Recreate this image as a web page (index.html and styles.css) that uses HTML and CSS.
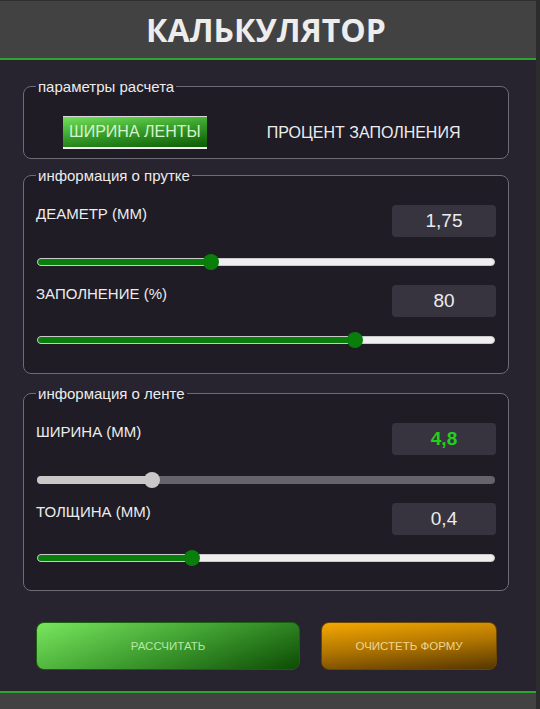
FILE: index.html
```html
<!DOCTYPE html>
<html lang="ru">
<head>
<meta charset="utf-8">
<title>Калькулятор</title>
<link rel="stylesheet" href="styles.css">
</head>
<body>
<div class="app">
  <header class="header"><h1 class="title">КАЛЬКУЛЯТОР</h1></header>
  <main class="main">
    <fieldset class="box box-params">
      <legend class="legend">параметры расчета</legend>
      <div class="toggle">
        <button class="tab tab-active">ШИРИНА ЛЕНТЫ</button>
        <button class="tab">ПРОЦЕНТ ЗАПОЛНЕНИЯ</button>
      </div>
    </fieldset>

    <fieldset class="box box-info">
      <legend class="legend">информация о прутке</legend>
      <div class="row">
        <span class="label">ДЕАМЕТР (ММ)</span>
        <span class="value">1,75</span>
      </div>
      <div class="slider"><div class="track"><div class="fill" style="width:38%"></div></div><span class="thumb" style="left:38%"></span></div>
      <div class="row">
        <span class="label">ЗАПОЛНЕНИЕ (%)</span>
        <span class="value">80</span>
      </div>
      <div class="slider slider-last"><div class="track"><div class="fill" style="width:69.4%"></div></div><span class="thumb" style="left:69.4%"></span></div>
    </fieldset>

    <fieldset class="box box-info box-tape">
      <legend class="legend">информация о ленте</legend>
      <div class="row">
        <span class="label">ШИРИНА (ММ)</span>
        <span class="value value-result">4,8</span>
      </div>
      <div class="slider slider-off"><div class="track"><div class="fill" style="width:25.1%"></div></div><span class="thumb" style="left:25.1%"></span></div>
      <div class="row">
        <span class="label">ТОЛЩИНА (ММ)</span>
        <span class="value">0,4</span>
      </div>
      <div class="slider slider-last"><div class="track"><div class="fill" style="width:33.8%"></div></div><span class="thumb" style="left:33.8%"></span></div>
    </fieldset>

    <div class="actions">
      <button class="btn btn-calc">РАССЧИТАТЬ</button>
      <button class="btn btn-clear">ОЧИСТЕТЬ ФОРМУ</button>
    </div>
  </main>
  <footer class="footer"></footer>
</div>
</body>
</html>
```

FILE: styles.css
```css
html, body {
  margin: 0;
  padding: 0;
  background: #2c2c2c;
}

.app {
  width: 536px;
  min-height: 740px;
  background: #28242f;
  display: flex;
  flex-direction: column;
  font-family: "Liberation Sans", Arial, sans-serif;
  color: #e8e8e8;
}

.header {
  height: 60px;
  box-sizing: border-box;
  background: #424242;
  border-top: 1px solid #303030;
  border-bottom: 2px solid #2ea52e;
  display: flex;
  align-items: center;
  justify-content: center;
}

.title {
  margin: 0 4px 0 0;
  font-family: "Open Sans", sans-serif;
  font-weight: 700;
  font-size: 32px;
  line-height: 1;
  color: #ededed;
}

.main {
  padding: 18px 27px 0 23px;
  display: flex;
  flex-direction: column;
}

.box {
  margin: 0;
  padding: 0 12px;
  border: 1px solid #6d6b74;
  border-radius: 8px;
  background: #1f1c26;
  min-width: 0;
}

.legend {
  padding: 0 2px;
  font-size: 15px;
  line-height: 17px;
  color: #ececec;
}

.box-params {
  padding-top: 21px;
  padding-bottom: 9px;
}

.toggle {
  display: flex;
  align-items: center;
  padding-left: 27px;
  gap: 54px;
}

.tab {
  font-family: "Liberation Sans", Arial, sans-serif;
  font-size: 16px;
  height: 33px;
  padding: 0 6px;
  border: none;
  background: transparent;
  color: #ececec;
}

.tab-active {
  background: linear-gradient(174deg, #74e05c 0%, #3aa22c 45%, #0b5a04 100%);
  border-top: 1px solid #d9d9d9;
  border-bottom: 2px solid #f2f2f2;
  color: #d6f2cf;
}

.box-info {
  margin-top: 8px;
  padding-top: 21px;
  padding-bottom: 25px;
}

.box-tape {
  margin-top: 11px;
  padding-bottom: 24px;
}

.row {
  display: flex;
  justify-content: space-between;
  align-items: flex-start;
  height: 32px;
}

.label {
  font-size: 15px;
  line-height: 17px;
  color: #ececec;
}

.value {
  width: 104px;
  height: 32px;
  border-radius: 4px;
  background: #37343f;
  display: flex;
  align-items: center;
  justify-content: center;
  font-size: 19px;
  color: #ececec;
}

.value-result {
  color: #22d01c;
  font-weight: 700;
}

.slider {
  position: relative;
  height: 16px;
  margin: 17px 1px 15px 1px;
}

.slider-last {
  margin-bottom: 0;
  margin-top: 15px;
}

.track {
  position: relative;
  top: 4px;
  height: 8px;
  box-sizing: border-box;
  border-radius: 4px;
  background: #efefef;
  border: 1px solid #c9c9c9;
  overflow: hidden;
}

.fill {
  height: 100%;
  background: #0a7e0a;
}

.thumb {
  position: absolute;
  top: 0;
  width: 16px;
  height: 16px;
  margin-left: -8px;
  border-radius: 50%;
  background: #0a7e0a;
}

.slider-off .track {
  background: #65636b;
  border: none;
}

.slider-off .fill {
  background: #c8c8c8;
}

.slider-off .thumb {
  background: #c8c8c8;
}

.actions {
  display: flex;
  gap: 21px;
  margin-top: 31px;
  padding-left: 13px;
}

.btn {
  height: 48px;
  border-radius: 8px;
  font-family: "Liberation Sans", Arial, sans-serif;
  font-size: 11.5px;
}

.btn-calc {
  width: 264px;
  background: linear-gradient(160deg, #78e65e 0%, #3f9e30 50%, #0d4c04 100%);
  border: 1px solid #1b5f10;
  color: #b4e8a6;
}

.btn-clear {
  width: 176px;
  background: linear-gradient(175deg, #f5a800 0%, #b07500 50%, #553600 100%);
  border: 1px solid #6a4400;
  color: #f0d58c;
}

.footer {
  margin-top: 21px;
  flex: 1;
  background: #424242;
  border-top: 2px solid #2ea52e;
}
```
